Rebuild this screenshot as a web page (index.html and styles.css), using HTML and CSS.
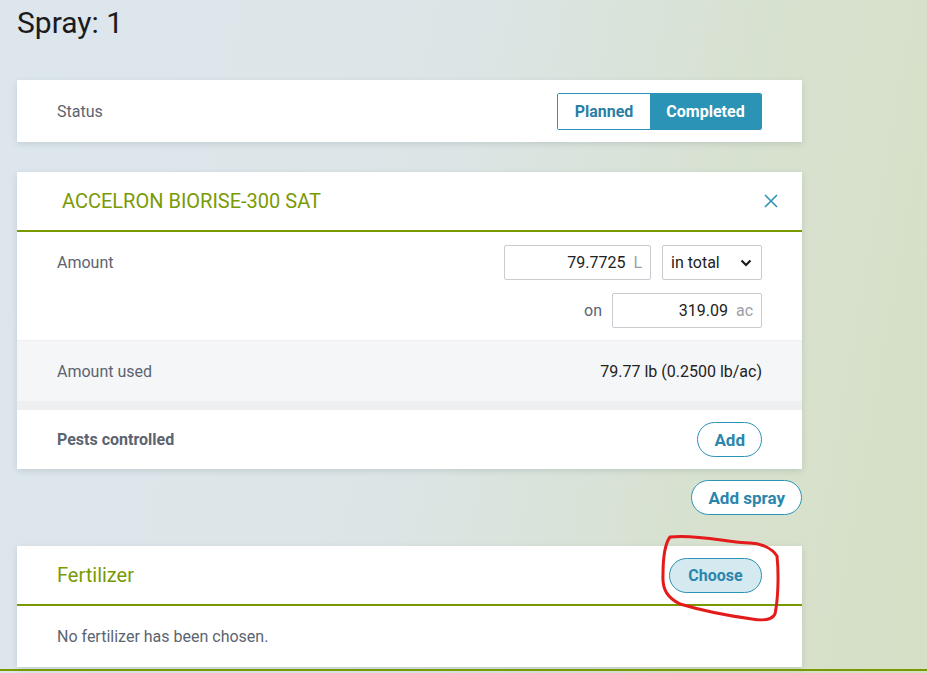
FILE: index.html
```html
<!DOCTYPE html>
<html>
<head>
<meta charset="utf-8">
<link rel="stylesheet" href="styles.css">
</head>
<body>
<div class="page">
  <h1 class="title">Spray: 1</h1>

  <section class="card status-card">
    <span class="label">Status</span>
    <div class="toggle">
      <button class="tg">Planned</button>
      <button class="tg active">Completed</button>
    </div>
  </section>

  <section class="card product-card">
    <header class="card-head product-head">
      <span class="product-name">ACCELRON BIORISE-300 SAT</span>
      <svg class="close" width="16" height="16" viewBox="0 0 16 16"><path d="M2 2 L14 14 M14 2 L2 14" stroke="#2f93b5" stroke-width="1.6" fill="none"/></svg>
    </header>
    <div class="amount-row">
      <span class="label">Amount</span>
      <div class="amount-fields">
        <div class="line">
          <div class="field f-amt"><span class="val">79.7725</span><span class="unit">L</span></div>
          <div class="select"><span>in total</span><svg width="12" height="8" viewBox="0 0 12 8"><path d="M1.5 1.5 L6 6 L10.5 1.5" stroke="#1d1d1d" stroke-width="2.2" fill="none"/></svg></div>
        </div>
        <div class="line">
          <span class="on">on</span>
          <div class="field f-area"><span class="val">319.09</span><span class="unit">ac</span></div>
        </div>
      </div>
    </div>
    <div class="used-row">
      <span class="label">Amount used</span>
      <span class="used-val">79.77 lb (0.2500 lb/ac)</span>
    </div>
    <div class="strip"></div>
    <div class="pests-row">
      <span class="label bold">Pests controlled</span>
      <button class="pill">Add</button>
    </div>
  </section>

  <div class="actions">
    <button class="pill">Add spray</button>
  </div>

  <section class="card fert-card">
    <header class="card-head fert-head">
      <span class="fert-name">Fertilizer</span>
      <button class="pill choose">Choose</button>
    </header>
    <div class="fert-body">No fertilizer has been chosen.</div>
  </section>
</div>
<div class="footer-line"></div>
<svg class="scribble" width="927" height="673" viewBox="0 0 927 673">
  <path d="M670 537 C 700 534, 728 543, 750 543 C 760 543, 772 548, 777 556 C 779 575, 778 600, 775 614 C 772 620, 764 621, 752 619 C 730 616, 700 610, 680 604 C 668 598, 662 590, 663 575 C 663 560, 664 545, 670 537 Z" fill="none" stroke="#e31b1b" stroke-width="3" stroke-linejoin="round"/>
</svg>
</body>
</html>
```

FILE: styles.css
```css
* { box-sizing: border-box; }
html, body { margin: 0; padding: 0; }
body {
  width: 927px;
  height: 673px;
  overflow: hidden;
  font-family: Roboto, "Liberation Sans", sans-serif;
  background: linear-gradient(100deg, #dde6ed 0%, #dce5e6 45%, #d7e1cf 75%, #d6e0c6 100%);
  position: relative;
}
.page {
  padding-left: 17px;
  width: 802px;
}
.title {
  margin: 0;
  font-weight: 400;
  font-size: 30px;
  line-height: 46px;
  color: #1b1b1b;
  height: 80px;
}
.card {
  background: #fff;
  box-shadow: 0 2px 6px rgba(80, 100, 110, 0.18);
}
.label { font-size: 16px; color: #5b6470; }
.label.bold { font-weight: 700; }
.status-card {
  height: 62px;
  display: flex;
  align-items: center;
  justify-content: space-between;
  padding: 0 40px 0 40px;
}
.toggle {
  display: flex;
  border: 1px solid #2b93b5;
  border-radius: 2px;
  overflow: hidden;
  height: 37px;
}
.tg {
  border: 0;
  background: #fff;
  color: #2b7fa5;
  font-family: Roboto, "Liberation Sans", sans-serif;
  font-weight: 700;
  font-size: 16px;
  padding: 0;
  width: 92px;
}
.tg.active {
  background: #2b93b5;
  color: #fff;
  width: 111px;
}
.product-card { margin-top: 30px; }
.card-head {
  display: flex;
  align-items: center;
  justify-content: space-between;
  border-bottom: 2px solid #789a00;
}
.product-head {
  height: 60px;
  padding: 0 23px 0 45px;
}
.product-name {
  font-size: 20px;
  color: #7a9a05;
}
.close { display: block; }
.amount-row {
  display: flex;
  justify-content: space-between;
  padding: 13px 40px 13px 40px;
  height: 109px;
  border-bottom: 1px solid #eceef1;
}
.amount-row .label { margin-top: 8px; }
.amount-fields {
  display: flex;
  flex-direction: column;
  align-items: flex-end;
  gap: 13px;
}
.line { display: flex; align-items: center; gap: 11px; }
.field {
  height: 35px;
  border: 1px solid #c8ccd1;
  border-radius: 2px;
  display: flex;
  align-items: center;
  justify-content: flex-end;
  padding: 0 8px;
  gap: 8px;
  font-size: 16px;
}
.f-amt { width: 147px; }
.f-area { width: 150px; }
.val { color: #222; }
.unit { color: #9aa1a8; }
.select {
  width: 100px;
  height: 35px;
  border: 1px solid #c8ccd1;
  border-radius: 2px;
  display: flex;
  align-items: center;
  justify-content: space-between;
  padding: 0 9px 0 8px;
  font-size: 16px;
  color: #222;
}
.on { font-size: 16px; color: #5b6470; margin-right: -1px; }
.used-row {
  background: #f5f6f8;
  height: 60px;
  display: flex;
  align-items: center;
  justify-content: space-between;
  padding: 0 40px;
}
.used-val { font-size: 16px; color: #222; }
.strip { height: 9px; background: #edeff1; }
.pests-row {
  height: 59px;
  display: flex;
  align-items: center;
  justify-content: space-between;
  padding: 0 40px;
}
.pill {
  height: 35px;
  border: 1px solid #2b93b5;
  border-radius: 18px;
  background: #fff;
  color: #2b86ad;
  font-family: Roboto, "Liberation Sans", sans-serif;
  font-weight: 700;
  font-size: 17px;
  padding: 0 16px;
}
.actions {
  display: flex;
  justify-content: flex-end;
  padding-top: 11px;
  height: 77px;
}
.fert-head {
  height: 60px;
  padding: 0 40px;
}
.fert-name { font-size: 20px; color: #7a9a05; }
.choose {
  background: #d5e9f1;
  width: 93px;
  padding: 0;
  font-size: 16px;
}
.fert-body {
  height: 61px;
  display: flex;
  align-items: center;
  padding: 0 40px;
  font-size: 16px;
  color: #5b6470;
}
.footer-line {
  position: absolute;
  left: 0;
  right: 0;
  top: 669px;
  height: 2px;
  background: #789a00;
}
.scribble {
  position: absolute;
  left: 0;
  top: 0;
  pointer-events: none;
}
```
